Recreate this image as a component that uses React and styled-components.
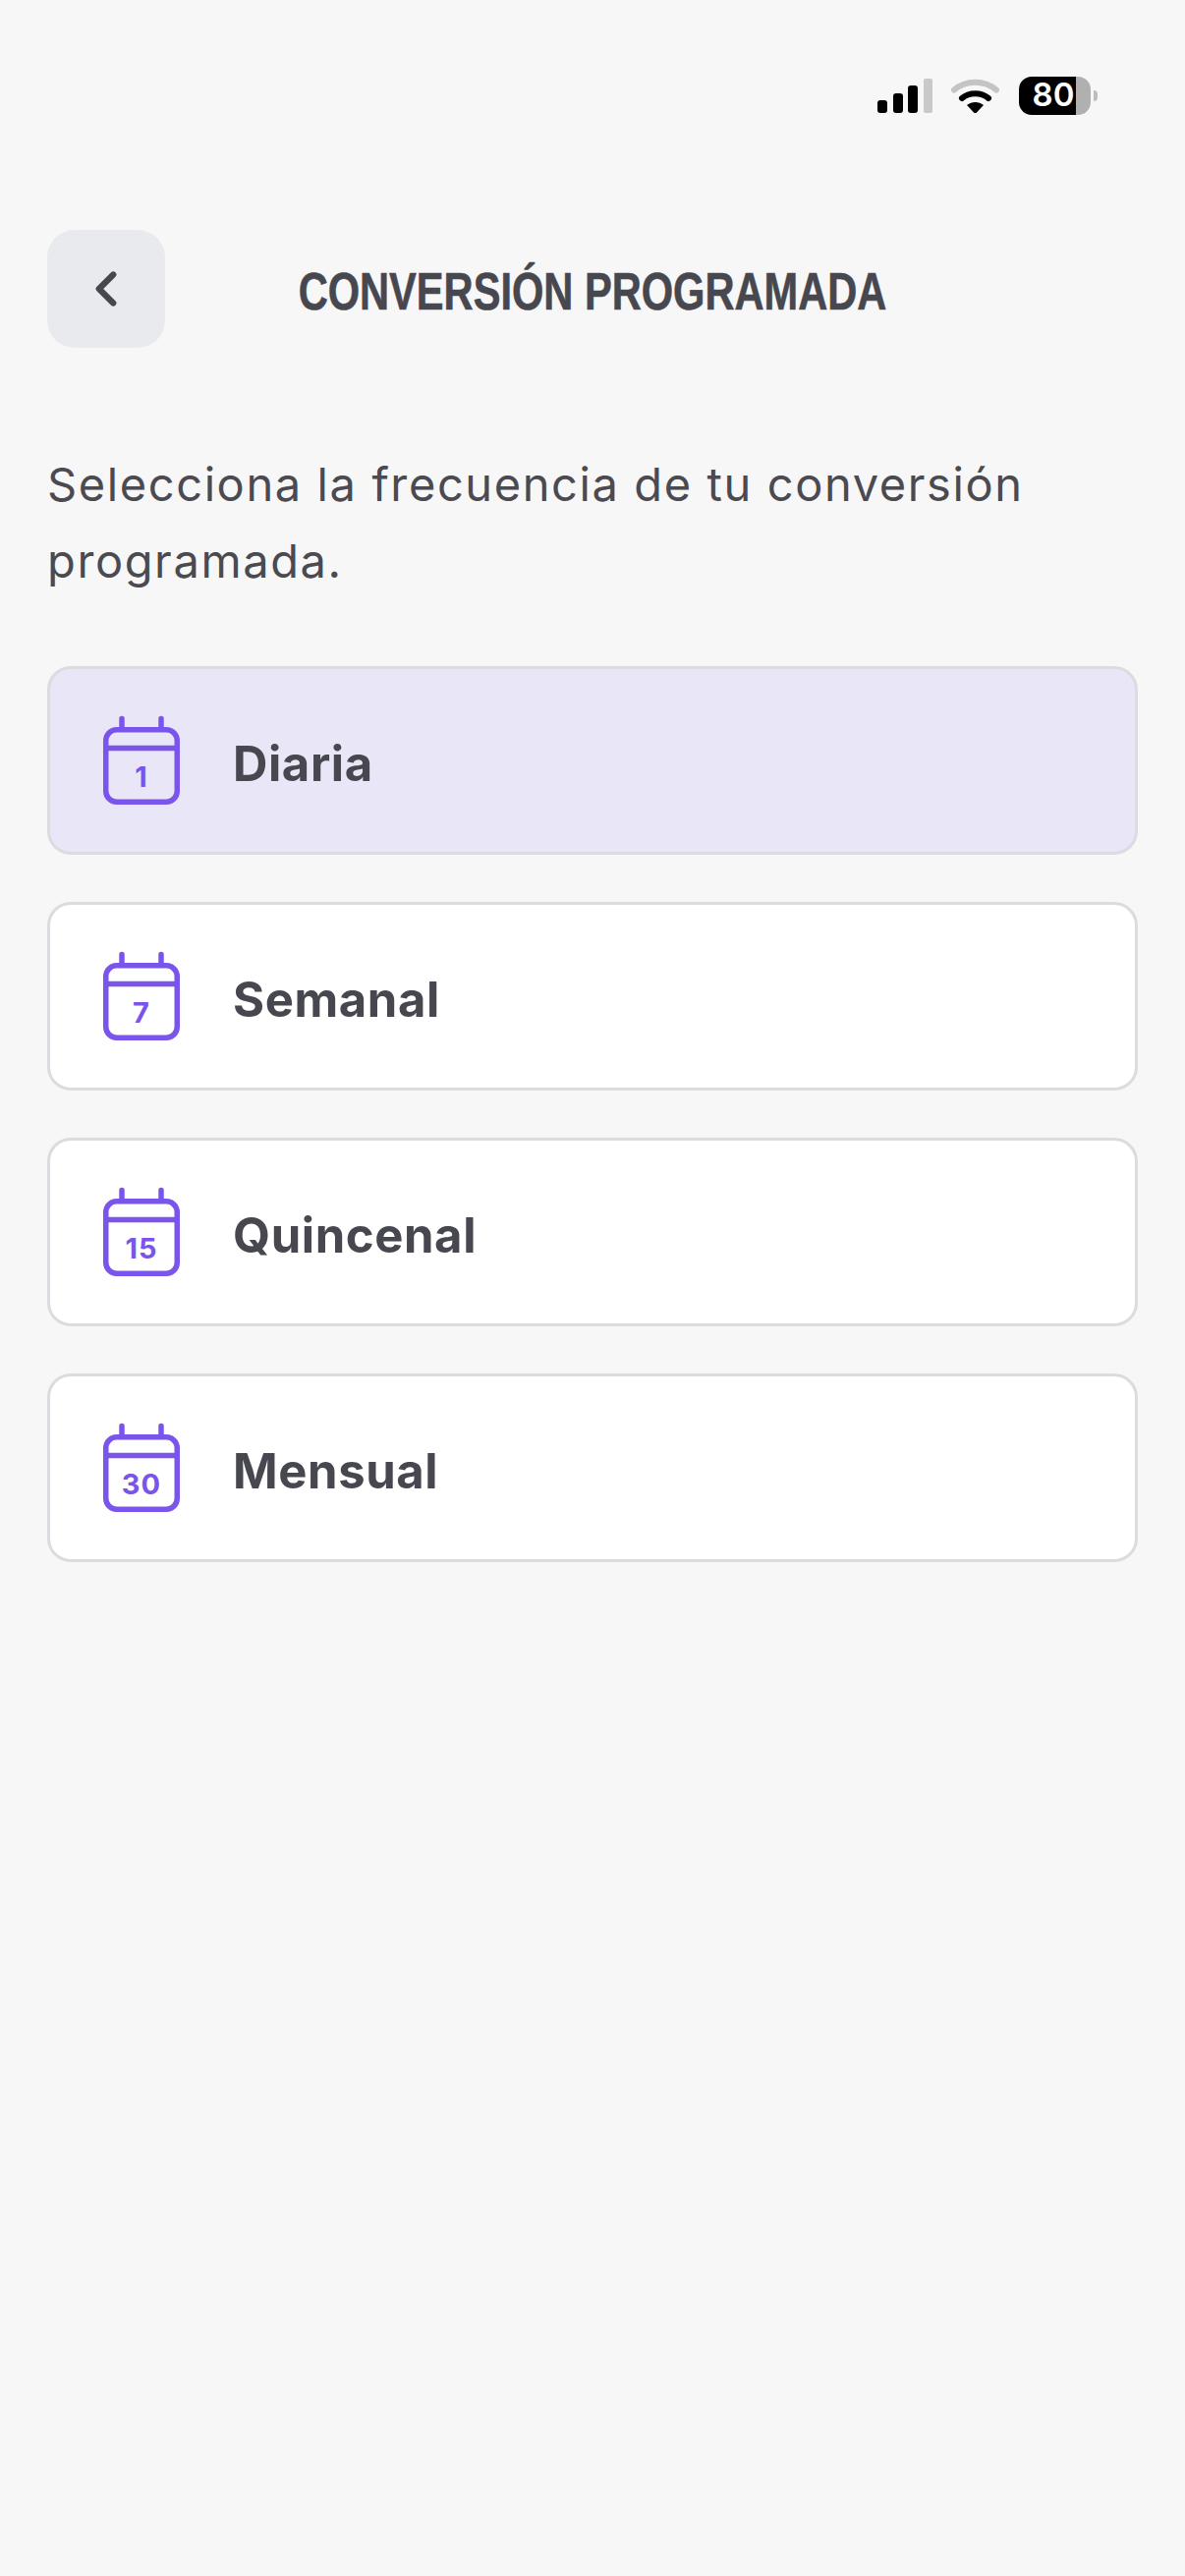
import styled, { createGlobalStyle } from 'styled-components';
import { ChevronLeft } from 'lucide-react';

const frequencies = [
  { label: 'Diaria', day: '1', selected: true },
  { label: 'Semanal', day: '7' },
  { label: 'Quincenal', day: '15' },
  { label: 'Mensual', day: '30' },
];

const SignalIcon = () => (
  <svg width="56" height="35" viewBox="0 0 56 35">
    <rect x="0" y="22" width="10" height="13" rx="3" fill="#000" />
    <rect x="16" y="15" width="10" height="20" rx="3" fill="#000" />
    <rect x="31" y="7" width="10" height="28" rx="3" fill="#000" />
    <rect x="47" y="0" width="9" height="35" rx="2" fill="#c9c9c9" />
  </svg>
);

const WifiIcon = () => (
  <svg width="49" height="35" viewBox="0 0 49 35">
    <path d="M3 11.5 C15 1 34 1 46 11.5" fill="none" stroke="#c4c4c4" strokeWidth="6" strokeLinecap="round" />
    <path d="M11 20 C18 13.5 31 13.5 38 20" fill="none" stroke="#000" strokeWidth="6" strokeLinecap="round" />
    <path d="M16 27 C21 23 28 23 33 27 L25.5 35 Q24.5 35.5 23.500 35 Z" fill="#000" />
  </svg>
);

const CalendarIcon = ({ day }) => (
  <svg width="80" height="92" viewBox="0 0 80 92">
    <g fill="none" stroke="#7a55ec" strokeWidth="5.5" strokeLinecap="round">
      <rect x="3.750" y="14.750" width="72.500" height="73.500" rx="11" />
      <path d="M3.750 33.500 H76.250" strokeLinecap="butt" />
      <path d="M20 3.500 V13 M60 3.500 V13" />
    </g>
    <CalendarDay x="40" y="73">{day}</CalendarDay>
  </svg>
);

export default function App() {
  return (
    <Page>
      <GlobalStyle />
      <StatusBar>
        <SignalIcon />
        <WifiIcon />
        <Battery>
          <BatteryBody>
            <BatteryLevel>80</BatteryLevel>
          </BatteryBody>
          <BatteryNub />
        </Battery>
      </StatusBar>

      <Header>
        <BackButton aria-label="Volver">
          <ChevronLeft size={58} strokeWidth={2.6} />
        </BackButton>
        <Title>CONVERSIÓN PROGRAMADA</Title>
      </Header>

      <Intro>Selecciona la frecuencia de tu conversión programada.</Intro>

      <List>
        {frequencies.map((item) => (
          <Option key={item.label} $selected={item.selected}>
            <CalendarIcon day={item.day} />
            <OptionLabel>{item.label}</OptionLabel>
          </Option>
        ))}
      </List>
    </Page>
  );
}

const GlobalStyle = createGlobalStyle`
  body {
    margin: 0;
    background-color: #f7f7f8;
    font-family: 'Inter', 'Liberation Sans', sans-serif;
  }
`;

const Page = styled.div`
  min-height: 100vh;
  padding: 0 48px;
  box-sizing: border-box;
  background-color: #f7f7f8;
`;

const StatusBar = styled.div`
  height: 140px;
  padding: 78px 0 0 845px;
  box-sizing: border-box;
  display: flex;
  align-items: flex-start;
  gap: 19px;

  svg {
    margin-top: 2px;
  }
`;

const Battery = styled.div`
  display: flex;
  align-items: center;
  gap: 3px;
  margin-left: 1px;
`;

const BatteryBody = styled.div`
  width: 73px;
  height: 39px;
  border-radius: 13px;
  background: linear-gradient(to right, #000 58px, #b0b0b0 58px);
`;

const BatteryLevel = styled.div`
  width: 58px;
  padding-left: 12px;
  box-sizing: border-box;
  text-align: center;
  color: #fff;
  font-size: 33px;
  font-weight: 600;
  line-height: 37px;
`;

const BatteryNub = styled.div`
  width: 4px;
  height: 11px;
  border-radius: 0 4px 4px 0;
  background-color: #bdbdbd;
`;

const Header = styled.header`
  margin-top: 94px;
  display: grid;
  grid-template-columns: 120px 1fr 120px;
  align-items: center;
`;

const BackButton = styled.button`
  width: 120px;
  height: 120px;
  padding: 0;
  border: none;
  border-radius: 28px;
  display: flex;
  align-items: center;
  justify-content: center;
  background-color: #e9eaee;
  color: #47474f;
`;

/* no condensed face is installed, so the regular bold is squeezed */
const Title = styled.h1`
  margin: 4px 0 0;
  text-align: center;
  white-space: nowrap;
  font-family: 'Liberation Sans', sans-serif;
  font-size: 53px;
  font-weight: 700;
  color: #47474f;
  transform: scaleX(0.785);
  -webkit-text-stroke: 0.6px #47474f;
`;

const Intro = styled.p`
  margin: 100px 0 0;
  font-size: 47px;
  font-weight: 400;
  line-height: 78px;
  letter-spacing: 1.6px;
  color: #4a4a50;
`;

const List = styled.div`
  margin-top: 68px;
  display: flex;
  flex-direction: column;
  gap: 48px;
`;

const Option = styled.div`
  height: 192px;
  padding-left: 53px;
  box-sizing: border-box;
  display: flex;
  align-items: center;
  gap: 53px;
  border: 3px solid #dcdce0;
  border-radius: 24px;
  background-color: ${(props) => (props.$selected ? '#e9e6f7' : '#fff')};
`;

const OptionLabel = styled.span`
  padding-top: 7px;
  font-size: 49px;
  font-weight: 700;
  letter-spacing: 0.6px;
  color: #47474f;
`;

const CalendarDay = styled.text`
  font-family: 'Inter', sans-serif;
  font-size: 29px;
  font-weight: 700;
  letter-spacing: 1px;
  fill: #7a55ec;
  text-anchor: middle;
`;
